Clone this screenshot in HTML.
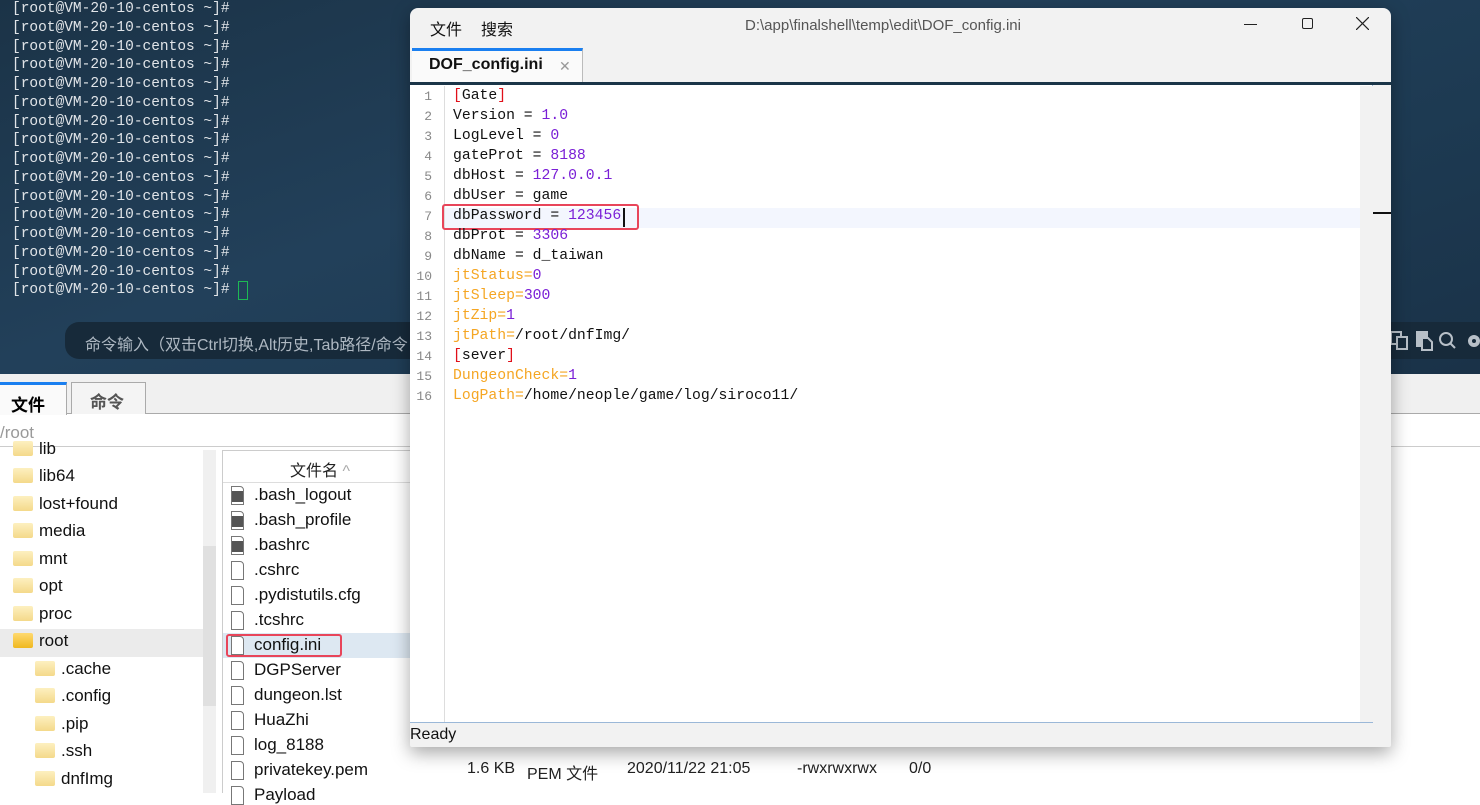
<!DOCTYPE html>
<html><head><meta charset="utf-8"><style>
*{margin:0;padding:0;box-sizing:border-box}
body{width:1480px;height:793px;overflow:hidden;position:relative;background:#fff;font-family:"Liberation Sans","Noto Sans CJK SC",sans-serif}
.abs{position:absolute}
#term{left:0;top:0;width:1480px;height:374px;background:linear-gradient(160deg,#1b3347 0%,#22405a 40%,#1d3a52 70%,#1a3248 100%)}
.tl{position:absolute;left:12px;font-family:"Liberation Mono","DejaVu Sans Mono",monospace;font-size:14.5px;color:#e0e4e8;white-space:pre}
#cmd{left:65px;top:322px;width:1415px;height:37px;background:#172a3a;border-radius:14px 0 0 14px}
#bottom{left:0;top:374px;width:1480px;height:419px;background:#fff}
.tree{position:absolute;left:39px;font-size:17px;color:#111}
.fold{position:absolute;width:20px;height:15px;background:linear-gradient(#fdf0c0,#f4d98a);border-radius:2px}
.fl{position:absolute;left:254px;font-size:17px;color:#111}
.fi{position:absolute;left:231px;width:13px;height:19px;border:1px solid #777;border-radius:0 4px 0 0;background:#fff}
.fi.d{background:linear-gradient(#fff 0 4px,#555 4px 15px,#fff 15px)}
#ed{left:410px;top:8px;width:981px;height:739px;background:#f2f2f2;border-radius:8px 8px 2px 2px;box-shadow:0 6px 18px rgba(0,0,0,.35);overflow:hidden}
.code{position:absolute;left:43px;font-family:"Liberation Mono","DejaVu Sans Mono",monospace;font-size:14.75px;white-space:pre;color:#111}
.ln{position:absolute;left:0;width:22px;text-align:right;font-family:"Liberation Mono",monospace;font-size:13px;color:#888}
.o{color:#f5a623}.p{color:#7a1fd6}.r{color:#e0101a}
</style></head><body>
<div id="term" class="abs"></div>
<div id="cmd" class="abs"><span class="abs" style="left:20px;top:9px;font-size:16px;color:#aeb8c2">命令输入（双击Ctrl切换,Alt历史,Tab路径/命令</span>
<svg class="abs" style="left:1325px;top:8px" width="90" height="22" viewBox="0 0 90 22" fill="none" stroke="#b8c0c8" stroke-width="2">
<rect x="1" y="2" width="10" height="12"/><rect x="7" y="7" width="10" height="12" fill="#172a3a"/>
<rect x="27" y="2" width="10" height="14" fill="#b8c0c8"/><path d="M32 8h6l4 4v8h-10z" fill="#172a3a"/>
<circle cx="56" cy="9" r="6"/><path d="M60 13l5 5"/>
<circle cx="84" cy="11" r="4" stroke-width="4"/></svg></div>

<div id="bottom" class="abs">
<div class="abs" style="left:0;top:0;width:1480px;height:40px;background:#f0f0f0;border-bottom:1px solid #aaa"></div>
<div class="abs" style="left:0;top:8px;width:67px;height:33px;background:#fafafa;border-top:3px solid #1a7ff0;border-right:1px solid #aaa;font-size:17px;font-weight:bold;padding:6px 0 0 11px">文件</div>
<div class="abs" style="left:71px;top:8px;width:75px;height:32px;background:#f4f4f4;border:1px solid #aaa;border-bottom:none;font-size:17px;font-weight:bold;color:#555;padding:5px 0 0 18px">命令</div>
<div class="abs" style="left:0;top:41px;width:1480px;height:32px;border-bottom:1px solid #ccc;font-size:17px;color:#999;padding:8px 0 0 0">/root</div>
<div class="abs" style="left:203px;top:76px;width:13px;height:343px;background:#f0f0f0"></div>
<div class="abs" style="left:203px;top:172px;width:13px;height:160px;background:#e0e0e0"></div>
<div class="abs" style="left:0;top:255px;width:203px;height:28px;background:#ebebeb"></div>
<div class="abs" style="left:222px;top:76px;width:800px;height:343px;border-left:1px solid #ccc;border-top:1px solid #ccc"></div>
<div class="abs" style="left:290px;top:83px;font-size:16px;color:#222">文件名 <span style="color:#aaa">^</span></div>
<div class="abs" style="left:223px;top:108px;width:800px;height:1px;background:#ddd"></div>
<div class="abs" style="left:223px;top:259px;width:190px;height:25px;background:#dde8f2"></div>
</div>

<div class="abs" style="left:226px;top:634px;width:116px;height:23px;border:2px solid #e8455a;border-radius:3px"></div>

<div id="ed" class="abs">
<div class="abs" style="left:20px;top:8px;font-size:16px;color:#111">文件</div>
<div class="abs" style="left:71px;top:8px;font-size:16px;color:#111">搜索</div>
<div class="abs" style="left:335px;top:9px;font-size:15px;color:#555">D:\app\finalshell\temp\edit\DOF_config.ini</div>
<div class="abs" style="left:834px;top:16px;width:13px;height:1px;background:#222"></div>
<div class="abs" style="left:892px;top:10px;width:11px;height:11px;border:1px solid #222;border-radius:2px"></div>
<svg class="abs" style="left:946px;top:9px" width="13" height="13" stroke="#222" stroke-width="1.2"><path d="M0 0L13 13M13 0L0 13"/></svg>
<div class="abs" style="left:2px;top:40px;width:171px;height:35px;background:#fafafa;border-top:3px solid #1a7ff0;border-right:1px solid #bbb"></div>
<div class="abs" style="left:19px;top:48px;font-size:16px;font-weight:bold;color:#111">DOF_config.ini</div>
<div class="abs" style="left:149px;top:50px;font-size:14px;color:#999">✕</div>
<div class="abs" style="left:0;top:74px;width:981px;height:3px;background:#1b3548"></div>
<div class="abs" style="left:0;top:77px;width:963px;height:638px;background:#fff;border-right:1px solid #9bb8d8;border-bottom:1px solid #9bb8d8"></div>
<div class="abs" style="left:950px;top:78px;width:13px;height:636px;background:#f2f2f2"></div>
<div class="abs" style="left:963px;top:204px;width:18px;height:2px;background:#111"></div>
<div class="abs" style="left:34px;top:78px;width:1px;height:636px;background:#ddd"></div>
<div class="abs" style="left:35px;top:200px;width:915px;height:20px;background:#f3f6fe"></div>
<div class="abs" style="left:32px;top:196px;width:197px;height:26px;border:2px solid #e8455a;border-radius:3px"></div>
<div class="abs" style="left:213px;top:200px;width:2px;height:19px;background:#111"></div>
<div class="abs" style="left:0;top:718px;font-size:16px;color:#111">Ready</div>
<div id="code"></div>
</div>

<script>
var t=document.getElementById('term');
for(var i=0;i<16;i++){var d=document.createElement('div');d.className='tl';d.style.top=(1+i*18.75)+'px';d.textContent='[root@VM-20-10-centos ~]#';t.appendChild(d);}
var c=document.createElement('div');c.className='abs';c.style.cssText='left:238px;top:281px;width:10px;height:19px;border:1.5px solid #1db954';t.appendChild(c);
var code=[
'<span class="r">[</span>Gate<span class="r">]</span>',
'Version = <span class="p">1.0</span>',
'LogLevel = <span class="p">0</span>',
'gateProt = <span class="p">8188</span>',
'dbHost = <span class="p">127.0.0.1</span>',
'dbUser = game',
'dbPassword = <span class="p">123456</span>',
'dbProt = <span class="p">3306</span>',
'dbName = d_taiwan',
'<span class="o">jtStatus=</span><span class="p">0</span>',
'<span class="o">jtSleep=</span><span class="p">300</span>',
'<span class="o">jtZip=</span><span class="p">1</span>',
'<span class="o">jtPath=</span>/root/dnfImg/',
'<span class="r">[</span>sever<span class="r">]</span>',
'<span class="o">DungeonCheck=</span><span class="p">1</span>',
'<span class="o">LogPath=</span>/home/neople/game/log/siroco11/'];
var h='';
for(var i=0;i<16;i++){var y=80+i*20;h+='<div class="ln" style="top:'+(y+1)+'px">'+(i+1)+'</div><div class="code" style="top:'+y+'px">'+code[i]+'</div>';}
document.getElementById('code').innerHTML=h;
var b=document.getElementById('bottom');h='';
var tr=[['lib',66],['lib64',93],['lost+found',121],['media',148],['mnt',176],['opt',203],['proc',231],['root',258],['.cache',286],['.config',313],['.pip',341],['.ssh',368],['dnfImg',396]];
tr.forEach(function(r,k){var x=k>7?61:39;h+='<div class="fold" style="left:'+(x-26)+'px;top:'+(r[1]+1)+'px'+(k==7?';background:linear-gradient(#ffd970,#f0b820)':'')+'"></div><div class="tree" style="left:'+x+'px;top:'+(r[1]-1)+'px">'+r[0]+'</div>';});
var fl=['.bash_logout','.bash_profile','.bashrc','.cshrc','.pydistutils.cfg','.tcshrc','config.ini','DGPServer','dungeon.lst','HuaZhi','log_8188','privatekey.pem','Payload'];
fl.forEach(function(n,k){var y=110+k*25;h+='<div class="fi'+(k<3?' d':'')+'" style="top:'+(y+2)+'px"></div><div class="fl" style="top:'+(y+1)+'px">'+n+'</div>';});
h+='<div class="abs" style="left:467px;top:386px;font-size:16px;color:#222">1.6 KB</div><div class="abs" style="left:527px;top:386px;font-size:16px;color:#222">PEM 文件</div><div class="abs" style="left:627px;top:386px;font-size:16px;color:#222">2020/11/22 21:05</div><div class="abs" style="left:797px;top:386px;font-size:16px;color:#222">-rwxrwxrwx</div><div class="abs" style="left:909px;top:386px;font-size:16px;color:#222">0/0</div>';
b.insertAdjacentHTML('beforeend',h);
</script>
</body></html>
